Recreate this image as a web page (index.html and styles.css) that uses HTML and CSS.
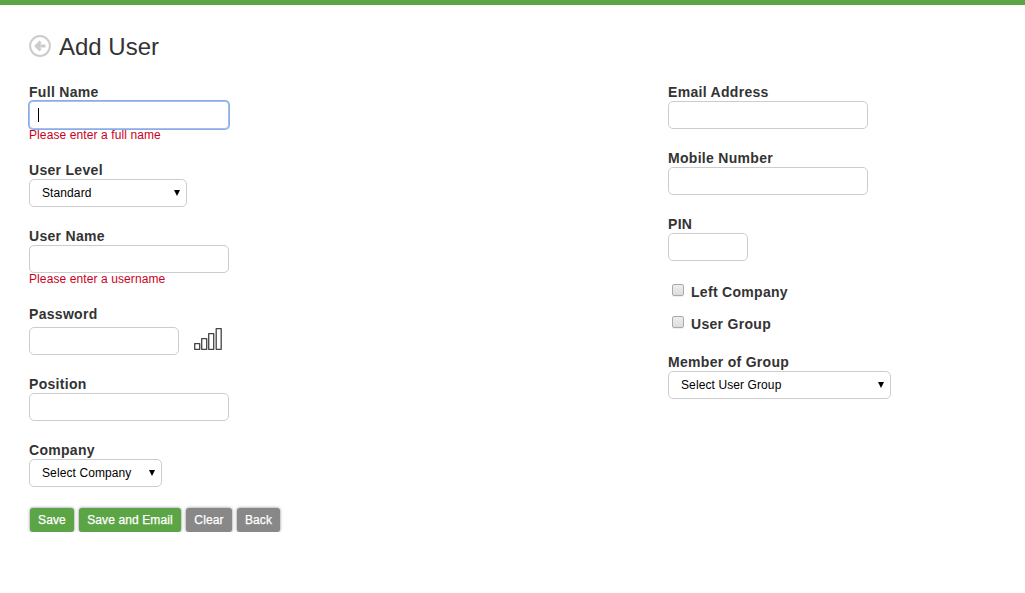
FILE: index.html
```html
<!DOCTYPE html>
<html lang="en">
<head>
<meta charset="utf-8">
<title>Add User</title>
<link rel="stylesheet" href="styles.css">
</head>
<body>
<header class="topbar"></header>
<main class="page">
  <div class="heading">
    <a class="back-link" aria-label="Back">
      <svg width="22" height="22" viewBox="0 0 22 22"><circle cx="11" cy="11" r="9.9" fill="none" stroke="#ccc" stroke-width="2"/><path d="M11.6 6.600 7.200 11l4.400 4.400M7.500 11H16.500" fill="none" stroke="#ccc" stroke-width="3"/></svg>
    </a>
    <h1 class="title">Add User</h1>
  </div>
  <form class="columns">
    <div class="column">
      <div class="field">
        <label class="label">Full Name</label>
        <div class="control"><input class="input focused" type="text"><span class="caret"></span></div>
        <span class="error">Please enter a full name</span>
      </div>
      <div class="field">
        <label class="label">User Level</label>
        <div class="select level"><span>Standard</span><svg class="arrow" width="6" height="6" viewBox="0 0 6 6"><path d="M0 0H6L3 6Z"/></svg></div>
      </div>
      <div class="field">
        <label class="label">User Name</label>
        <input class="input" type="text">
        <span class="error">Please enter a username</span>
      </div>
      <div class="field">
        <label class="label">Password</label>
        <div class="password-row">
          <input class="input password" type="password">
          <svg width="28" height="22" viewBox="0 0 28 22" fill="#fff" stroke="#444" stroke-width="1.3" stroke-linejoin="round"><path d="M.7 15.700h5v5.600h-5zM7.700 10.700h5v10.600h-5zM14.700 5.700h5v15.600h-5zM22.200 .7h5v20.600h-5z"/></svg>
        </div>
      </div>
      <div class="field">
        <label class="label">Position</label>
        <input class="input" type="text">
      </div>
      <div class="field">
        <label class="label">Company</label>
        <div class="select company"><span>Select Company</span><svg class="arrow" width="6" height="6" viewBox="0 0 6 6"><path d="M0 0H6L3 6Z"/></svg></div>
      </div>
      <div class="actions">
        <button class="button primary save" type="button">Save</button>
        <button class="button primary email" type="button">Save and Email</button>
        <button class="button clear" type="button">Clear</button>
        <button class="button back" type="button">Back</button>
      </div>
    </div>
    <div class="column">
      <div class="field">
        <label class="label">Email Address</label>
        <input class="input" type="text">
      </div>
      <div class="field">
        <label class="label">Mobile Number</label>
        <input class="input" type="text">
      </div>
      <div class="field">
        <label class="label">PIN</label>
        <input class="input pin" type="text">
      </div>
      <div class="checks">
        <label class="check label"><input class="checkbox" type="checkbox">Left Company</label>
        <label class="check label"><input class="checkbox" type="checkbox">User Group</label>
      </div>
      <div class="field">
        <label class="label">Member of Group</label>
        <div class="select group"><span>Select User Group</span><svg class="arrow" width="6" height="6" viewBox="0 0 6 6"><path d="M0 0H6L3 6Z"/></svg></div>
      </div>
    </div>
  </form>
</main>
</body>
</html>
```
FILE: styles.css
```css
* { box-sizing: border-box; }
body { margin: 0; background: #fff; color: #333; font: 12px/18px "Liberation Sans", Arial, sans-serif; }
.topbar { height: 5px; background: #5ba546; }
.page { padding: 26px 29px 0; }
.heading { display: flex; align-items: center; gap: 8px; height: 32px; margin-bottom: 20px; }
.back-link { display: flex; margin-top: -2px; }
.title { margin: 0; font-size: 24px; line-height: 32px; font-weight: 400; }
.columns { display: grid; grid-template-columns: 639px 1fr; }
.column { display: flex; flex-direction: column; gap: 20px; align-items: flex-start; }
.field { display: flex; flex-direction: column; align-items: flex-start; }
.label { font-size: 14px; line-height: 18px; font-weight: 700; letter-spacing: 0.3px; }
.control { position: relative; display: flex; }
.input { width: 200px; height: 28px; margin: 0; padding: 0 9px; border: 1px solid #ccc; border-radius: 5px; background: #fff; outline: none; }
.focused { border-color: #a9c0e6; border-radius: 4px; box-shadow: 0 0 0 1px #86adf0; }
.caret { position: absolute; left: 9px; top: 7px; width: 1px; height: 14px; background: #000; }
.error { height: 12px; line-height: 12px; color: #cc0022; letter-spacing: 0.1px; }
.select { display: flex; align-items: center; justify-content: space-between; height: 28px; padding: 0 6px 1px 12px; border: 1px solid #ccc; border-radius: 5px; color: #000; letter-spacing: 0.1px; }
.level { width: 158px; }
.company { width: 133px; }
.group { width: 223px; }
.arrow { display: block; }
.password-row { display: flex; gap: 15px; padding-top: 4px; align-items: flex-start; }
.password-row svg { margin-top: 1px; }
.password { width: 150px; }
.pin { width: 80px; }
.checks { display: flex; flex-direction: column; gap: 14px; margin: 2px 0 0 4px; }
.check { display: flex; gap: 7px; }
.checkbox { appearance: none; width: 12px; height: 12px; margin: 1px 0 0; border: 1px solid #aaa; border-radius: 2px; background: linear-gradient(#eee, #ddd); box-shadow: 0 1px 1px #eee; }
.actions { display: flex; gap: 5px; padding-left: 1px; margin-top: 1px; }
.button { height: 24px; padding: 0; border: 0; border-radius: 3px; background: #888; color: #fff; font: 12px/24px "Liberation Sans", Arial, sans-serif; letter-spacing: 0.12px; -webkit-text-stroke: 0.25px #fff; box-shadow: 0 0 3px rgba(0, 0, 0, 0.5); }
.primary { background: #5ba546; }
.save { width: 44px; }
.email { width: 102px; }
.clear { width: 46px; }
.back { width: 43px; }
```
